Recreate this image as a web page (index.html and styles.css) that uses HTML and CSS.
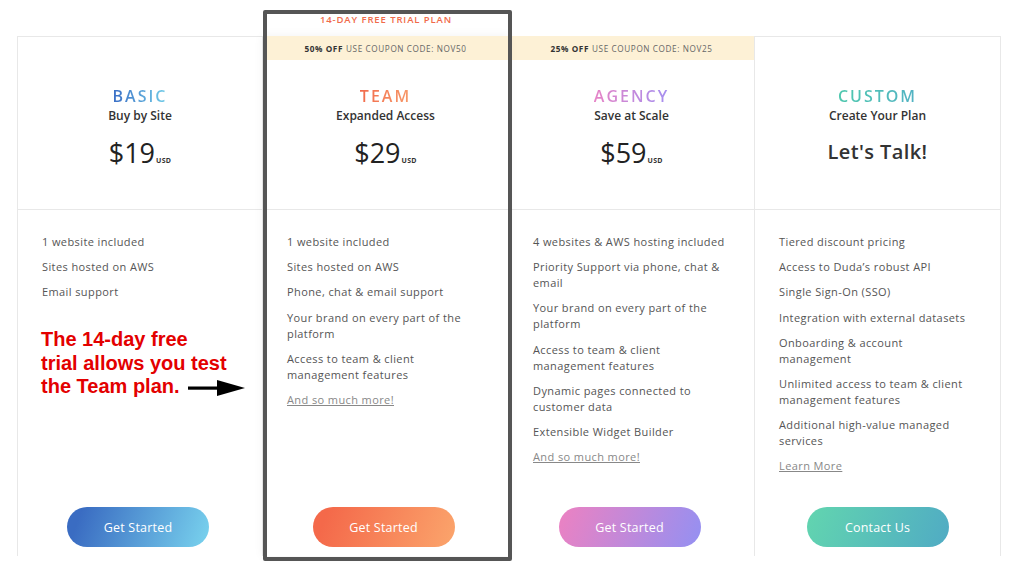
FILE: index.html
```html
<!DOCTYPE html>
<html lang="en">
<head>
<meta charset="utf-8">
<title>Pricing</title>
<link rel="stylesheet" href="styles.css">
</head>
<body>
<div class="page">
  <div class="pricing">
    <div class="col">
      <div class="label"></div>
      <div class="card first">
        <div class="coupon empty"></div>
        <div class="head">
          <div class="title basic">BASIC</div>
          <div class="sub">Buy by Site</div>
          <div class="price">$19<span class="usd">USD</span></div>
        </div>
        <ul class="features">
          <li>1 website included</li>
          <li>Sites hosted on AWS</li>
          <li>Email support</li>
        </ul>
        <div class="cta shift"><a class="btn b-basic">Get Started</a></div>
      </div>
    </div>
    <div class="col">
      <div class="label">14-DAY FREE TRIAL PLAN</div>
      <div class="card team">
        <div class="coupon"><b>50% OFF</b> USE COUPON CODE: NOV50</div>
        <div class="head">
          <div class="title teamc">TEAM</div>
          <div class="sub">Expanded Access</div>
          <div class="price">$29<span class="usd">USD</span></div>
        </div>
        <ul class="features">
          <li>1 website included</li>
          <li>Sites hosted on AWS</li>
          <li>Phone, chat &amp; email support</li>
          <li>Your brand on every part of the platform</li>
          <li>Access to team &amp; client management features</li>
          <li><a class="more">And so much more!</a></li>
        </ul>
        <div class="cta shift"><a class="btn b-team">Get Started</a></div>
      </div>
    </div>
    <div class="col">
      <div class="label"></div>
      <div class="card">
        <div class="coupon"><b>25% OFF</b> USE COUPON CODE: NOV25</div>
        <div class="head">
          <div class="title agency">AGENCY</div>
          <div class="sub">Save at Scale</div>
          <div class="price">$59<span class="usd">USD</span></div>
        </div>
        <ul class="features">
          <li>4 websites &amp; AWS hosting included</li>
          <li>Priority Support via phone, chat &amp; email</li>
          <li>Your brand on every part of the platform</li>
          <li>Access to team &amp; client management features</li>
          <li>Dynamic pages connected to customer data</li>
          <li>Extensible Widget Builder</li>
          <li><a class="more">And so much more!</a></li>
        </ul>
        <div class="cta shift"><a class="btn b-agency">Get Started</a></div>
      </div>
    </div>
    <div class="col">
      <div class="label"></div>
      <div class="card">
        <div class="coupon empty"></div>
        <div class="head">
          <div class="title custom">CUSTOM</div>
          <div class="sub">Create Your Plan</div>
          <div class="talk">Let's Talk!</div>
        </div>
        <ul class="features">
          <li>Tiered discount pricing</li>
          <li>Access to Duda’s robust API</li>
          <li>Single Sign-On (SSO)</li>
          <li>Integration with external datasets</li>
          <li>Onboarding &amp; account management</li>
          <li>Unlimited access to team &amp; client management features</li>
          <li>Additional high-value managed services</li>
          <li><a class="more">Learn More</a></li>
        </ul>
        <div class="cta"><a class="btn b-custom">Contact Us</a></div>
      </div>
    </div>
  </div>

  <div class="highlight"></div>

  <div class="note">
    <p>The 14-day free<br>trial allows you test<br>the Team plan.</p>
    <svg class="arrow" width="58" height="18" viewBox="0 0 58 18">
      <rect x="0" y="7.5" width="34" height="3.2" fill="#000"/>
      <polygon points="29,1 57,9 29,17" fill="#000"/>
    </svg>
  </div>
</div>
</body>
</html>
```

FILE: styles.css
```css
* { box-sizing: border-box; }
html, body { margin: 0; padding: 0; background: #fff; }
body { font-family: "Open Sans", "DejaVu Sans", sans-serif; color: #444; }

.page {
  position: relative;
  width: 1024px;
  height: 573px;
  padding: 10px 0 0 17px;
}

.pricing {
  display: grid;
  grid-template-columns: 246px 246px 246px 246px;
}

.col { display: flex; flex-direction: column; }

.label {
  height: 26px;
  padding-top: 3px;
  display: flex;
  justify-content: center;
  font-size: 9.5px;
  line-height: 14px;
  font-weight: 600;
  letter-spacing: 0.9px;
  color: #f06a4a;
}

.card {
  height: 520px;
  display: flex;
  flex-direction: column;
  border-top: 1px solid #e8e8e8;
  border-right: 1px solid #e8e8e8;
  background: #fff;
}
.card.first { border-left: 1px solid #e8e8e8; }
.card.team {
  border-top-color: #fff;
  box-shadow: 0 0 10px rgba(0,0,0,0.06);
  position: relative;
  z-index: 1;
  border-right-color: #f2f2f2;
}

.coupon {
  height: 24px;
  margin-top: -1px;
  display: flex;
  align-items: center;
  justify-content: center;
  background: #fdf1d6;
  font-size: 8.2px;
  letter-spacing: 0.6px;
  color: #666;
}
.coupon b { color: #333; font-weight: 700; margin-right: 3px; }
.coupon.empty { background: transparent; }

.head {
  height: 150px;
  border-bottom: 1px solid #e8e8e8;
  display: flex;
  flex-direction: column;
  align-items: center;
  padding-top: 26px;
}

.title {
  font-size: 16px;
  line-height: 20px;
  font-weight: 600;
  letter-spacing: 2px;
  -webkit-background-clip: text;
  background-clip: text;
  color: transparent;
}
.title.basic { background-image: linear-gradient(90deg, #3b6fc6, #72cde8); }
.title.teamc { background-image: linear-gradient(90deg, #f26b4c, #f79a6a); }
.title.agency { background-image: linear-gradient(90deg, #e683c6, #a48ff0); }
.title.custom { background-image: linear-gradient(90deg, #4fc8ae, #52b2c4); }

.sub {
  font-size: 12px;
  line-height: 17px;
  margin-top: 1px;
  font-weight: 600;
  color: #333;
}

.price {
  margin-top: 12px;
  font-size: 27px;
  line-height: 34px;
  color: #222;
  font-weight: 400;
}
.usd {
  font-size: 7px;
  font-weight: 700;
  letter-spacing: 0.3px;
  margin-left: 1px;
  color: #333;
}

.talk {
  margin-top: 13px;
  font-size: 20px;
  line-height: 30px;
  font-weight: 600;
  color: #333;
  letter-spacing: 0.4px;
}

.features {
  list-style: none;
  margin: 0;
  padding: 24px 22px 0 24px;
  font-size: 11px;
  line-height: 16px;
  color: #555;
  letter-spacing: 0.4px;
}
.features li { margin-bottom: 9.2px; }
.more { color: #888; text-decoration: underline; }

.cta {
  margin-top: auto;
  padding-bottom: 9px;
  display: flex;
  justify-content: center;
}
.cta.shift { padding-right: 4px; }
.btn {
  width: 142px;
  height: 40px;
  border-radius: 20px;
  display: flex;
  align-items: center;
  justify-content: center;
  font-size: 12.5px;
  color: #fff;
  letter-spacing: 0.2px;
}
.b-basic { background: linear-gradient(110deg, #3a6cc2 10%, #79d3ee 100%); }
.b-team { background: linear-gradient(110deg, #f4694a 10%, #fba56c 100%); }
.b-agency { background: linear-gradient(110deg, #e882c4 5%, #9490f2 100%); }
.b-custom { background: linear-gradient(110deg, #61d3b0 5%, #50abc4 100%); }

.highlight {
  position: absolute;
  left: 263px;
  top: 10px;
  width: 249px;
  height: 551px;
  border: 4px solid #555;
  border-radius: 2px;
  z-index: 2;
}

.note {
  position: absolute;
  left: 41px;
  top: 328px;
  z-index: 3;
}
.note p {
  margin: 0;
  font-family: "Liberation Sans", Arial, sans-serif;
  font-weight: 700;
  font-size: 20px;
  line-height: 23.5px;
  color: #e30000;
}
.arrow {
  position: absolute;
  left: 147px;
  top: 51px;
}
```
